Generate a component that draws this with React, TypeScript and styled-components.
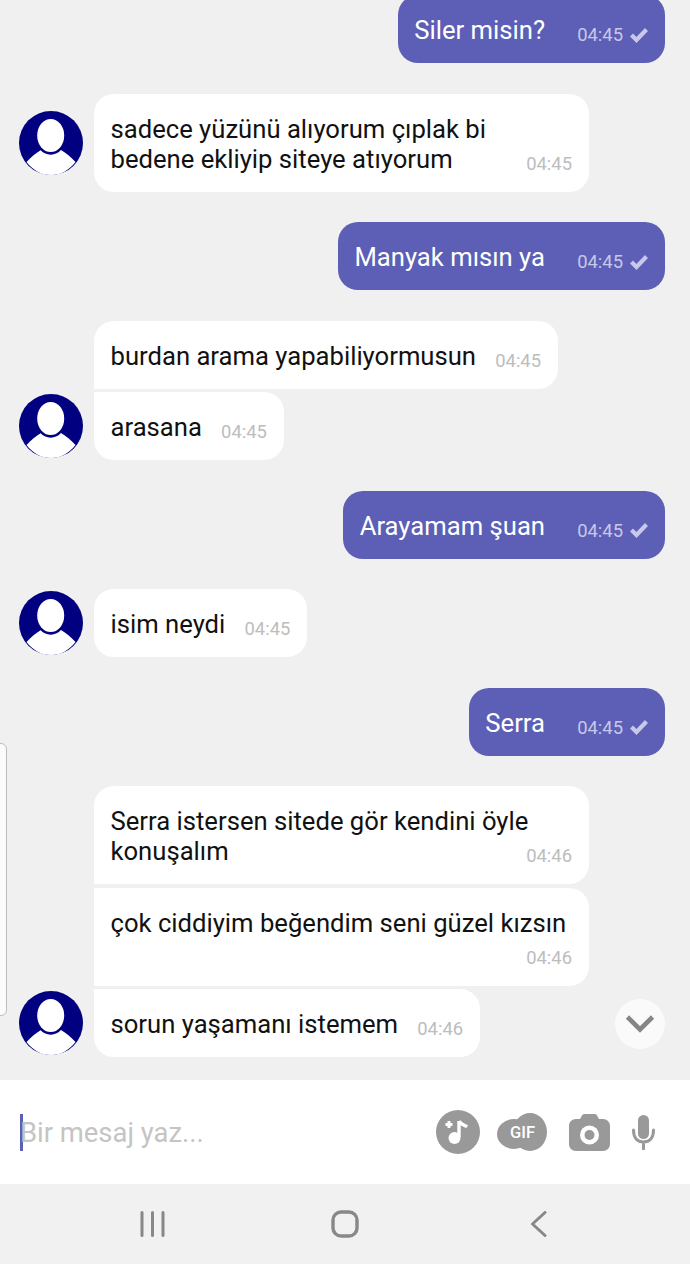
import styled, { createGlobalStyle } from "styled-components";

const GlobalStyle = createGlobalStyle`
  html, body {
    margin: 0;
    padding: 0;
    background: #f0f0f0;
  }
`;

const Screen = styled.div`
  position: relative;
  display: flex;
  flex-direction: column;
  width: 690px;
  height: 1264px;
  overflow: hidden;
  background: #f0f0f0;
  font-family: Roboto, "Noto Sans", sans-serif;
`;

const Chat = styled.div`
  display: flex;
  flex-direction: column;
  justify-content: flex-end;
  gap: 30.5px;
  height: 1080px;
  padding: 0 25px 23px 19px;
  box-sizing: border-box;
  overflow: hidden;
`;

const OwnRow = styled.div`
  display: flex;
  flex-shrink: 0;
  justify-content: flex-end;
`;

const Group = styled.div`
  display: grid;
  flex-shrink: 0;
  grid-template-columns: 64px 1fr;
  column-gap: 11px;
  row-gap: 3.4px;
  align-items: center;
  justify-items: start;
`;

const Avatar = styled.svg`
  grid-column: 1;
  width: 64px;
  height: 64px;
`;

const Bubble = styled.div<{ $own?: boolean; $joinTop?: boolean; $joinBottom?: boolean }>`
  display: grid;
  grid-column: 2;
  max-width: 495px;
  box-sizing: border-box;
  padding: 20px 17px 18px 16.5px;
  border-radius: 20px;
  border-top-left-radius: ${(p) => (p.$joinTop ? "0" : "20px")};
  border-bottom-left-radius: ${(p) => (p.$joinBottom ? "0" : "20px")};
  background: ${(p) => (p.$own ? "#5c5fb5" : "#ffffff")};
  color: ${(p) => (p.$own ? "#ffffff" : "#111111")};
`;

const Text = styled.div`
  grid-area: 1 / 1;
  font-size: 25.65px;
  line-height: 30px;
`;

const MetaSpace = styled.span<{ $own?: boolean }>`
  display: inline-block;
  width: ${(p) => (p.$own ? "103px" : "65px")};
  height: 1px;
`;

const Meta = styled.div<{ $own?: boolean }>`
  display: flex;
  grid-area: 1 / 1;
  align-self: end;
  justify-self: end;
  align-items: center;
  gap: 7px;
  font-size: 18.4px;
  line-height: 20px;
  color: ${(p) => (p.$own ? "#c7c8ea" : "#bdbdbd")};
`;

const Composer = styled.div`
  display: flex;
  flex-shrink: 0;
  align-items: center;
  height: 104px;
  padding: 0 35px 0 20px;
  box-sizing: border-box;
  background: #ffffff;
`;

const Caret = styled.div`
  flex-shrink: 0;
  width: 3px;
  height: 37px;
  background: #5c5fb5;
`;

const Placeholder = styled.div`
  flex: 1;
  margin: 2px 0 0 -3px;
  font-size: 27.4px;
  line-height: 37px;
  color: #c4c4c4;
`;

const Tools = styled.div`
  display: flex;
  align-items: center;
`;

const Tool = styled.svg<{ $gap: number }>`
  display: block;
  margin-left: ${(p) => p.$gap}px;
`;

const NavBar = styled.div`
  display: flex;
  flex: 1;
  align-items: center;
  padding-left: 140px;
  background: #f1f1f1;
`;

const NavIcon = styled.svg<{ $gap: number }>`
  display: block;
  margin-left: ${(p) => p.$gap}px;
`;

const ScrollButton = styled.div`
  position: absolute;
  top: 999px;
  left: 615px;
  display: flex;
  align-items: center;
  justify-content: center;
  width: 50px;
  height: 50px;
  border-radius: 50%;
  background: #fafafa;
`;

const EdgeHandle = styled.div`
  position: absolute;
  top: 743px;
  left: -6px;
  width: 13px;
  height: 273px;
  box-sizing: border-box;
  border: 1px solid #bdbdbd;
  border-radius: 6px;
  background: #fbfbfb;
`;

const UserAvatar = () => (
  <Avatar viewBox="0 0 64 64">
    <circle cx="32" cy="32" r="32" fill="#000080" />
    <path d="M7.5 51C12 46 17 42 22 39L42 39C47 42 52 46 56.5 51C50 59.5 41.5 64 32 64C22.5 64 14 59.5 7.5 51Z" fill="#fff" />
    <ellipse cx="31.7" cy="25" rx="15.5" ry="18.8" fill="#000080" />
    <ellipse cx="31.7" cy="24.5" rx="13.5" ry="16.5" fill="#fff" />
  </Avatar>
);

const Check = () => (
  <svg width="18" height="15" viewBox="0 0 18 15">
    <path d="M1.5 7L6.5 12L16.5 1.5" fill="none" stroke="#c7c8ea" strokeWidth="4.2" />
  </svg>
);

const Own = ({ text }: { text: string }) => (
  <OwnRow>
    <Bubble $own>
      <Text>
        {text}
        <MetaSpace $own />
      </Text>
      <Meta $own>
        04:45
        <Check />
      </Meta>
    </Bubble>
  </OwnRow>
);

type IncomingProps = {
  text: string;
  time?: string;
  joinTop?: boolean;
  joinBottom?: boolean;
};

const Incoming = ({ text, time = "04:45", joinTop, joinBottom }: IncomingProps) => (
  <Bubble $joinTop={joinTop} $joinBottom={joinBottom}>
    <Text>
      {text}
      <MetaSpace />
    </Text>
    <Meta>{time}</Meta>
  </Bubble>
);

export default function App() {
  return (
    <Screen>
      <GlobalStyle />
      <Chat>
        <Own text="Siler misin?" />
        <Group>
          <UserAvatar />
          <Incoming text="sadece yüzünü alıyorum çıplak bi bedene ekliyip siteye atıyorum" />
        </Group>
        <Own text="Manyak mısın ya" />
        <Group>
          <Incoming joinBottom text="burdan arama yapabiliyormusun" />
          <UserAvatar />
          <Incoming joinTop text="arasana" />
        </Group>
        <Own text="Arayamam şuan" />
        <Group>
          <UserAvatar />
          <Incoming text="isim neydi" />
        </Group>
        <Own text="Serra" />
        <Group>
          <Incoming joinBottom time="04:46" text="Serra istersen sitede gör kendini öyle konuşalım" />
          <Incoming joinTop joinBottom time="04:46" text="çok ciddiyim beğendim seni güzel kızsın" />
          <UserAvatar />
          <Incoming joinTop time="04:46" text="sorun yaşamanı istemem" />
        </Group>
      </Chat>
      <Composer>
        <Caret />
        <Placeholder>Bir mesaj yaz...</Placeholder>
        <Tools>
          <Tool $gap={0} width="44" height="44" viewBox="0 0 44 44">
            <circle cx="22" cy="22" r="22" fill="#999" />
            <path d="M23 11V27" stroke="#fff" strokeWidth="3.4" />
            <path d="M23 11C25 15 29 15 31 17" fill="none" stroke="#fff" strokeWidth="3.4" />
            <circle cx="18.5" cy="28" r="6" fill="#fff" />
            <path d="M13 11V18M9.5 14.5H16.5" stroke="#fff" strokeWidth="3" />
          </Tool>
          <Tool $gap={17} width="50" height="38" viewBox="0 0 50 38">
            <ellipse cx="17" cy="21" rx="17" ry="15" fill="#999" />
            <ellipse cx="33" cy="19" rx="17" ry="19" fill="#999" />
            <text x="25.5" y="25" textAnchor="middle" fontFamily="Roboto, sans-serif" fontWeight="500" fontSize="16.5" fill="#fff">GIF</text>
          </Tool>
          <Tool $gap={22} width="41" height="37" viewBox="0 0 41 37">
            <path d="M7 5H11L13 1.5C13.5 .5 14.5 0 15.5 0H25.5C26.5 0 27.5 .5 28 1.5L30 5H34C38 5 41 8 41 12V30C41 34 38 37 34 37H7C3 37 0 34 0 30V12C0 8 3 5 7 5Z" fill="#999" />
            <circle cx="20.5" cy="21" r="9.5" fill="#fff" />
            <circle cx="20.5" cy="21" r="5" fill="#999" />
          </Tool>
          <Tool $gap={22} width="23" height="35" viewBox="0 0 23 35">
            <rect x="6" y="0" width="11" height="24" rx="5.5" fill="#999" />
            <path d="M1.5 15C1.5 23 5.5 27 11.5 27C17.5 27 21.5 23 21.5 15M11.5 27V34" fill="none" stroke="#999" strokeWidth="3" strokeLinecap="round" />
          </Tool>
        </Tools>
      </Composer>
      <NavBar>
        <NavIcon $gap={0} width="25" height="26" viewBox="0 0 25 26">
          <path d="M2 1.5V24.5M12.5 1.5V24.5M23 1.5V24.5" stroke="#888" strokeWidth="3" strokeLinecap="round" />
        </NavIcon>
        <NavIcon $gap={166} width="28" height="28" viewBox="0 0 28 28">
          <rect x="2" y="2" width="24" height="24" rx="8" fill="none" stroke="#888" strokeWidth="3.4" />
        </NavIcon>
        <NavIcon $gap={171} width="17" height="26" viewBox="0 0 17 26">
          <path d="M15 1.5L2.5 13L15 24.5" fill="none" stroke="#888" strokeWidth="3" strokeLinecap="round" strokeLinejoin="round" />
        </NavIcon>
      </NavBar>
      <ScrollButton>
        <svg width="30" height="20" viewBox="0 0 30 20">
          <path d="M2.5 3L15 15.5L27.5 3" fill="none" stroke="#858585" strokeWidth="4.6" />
        </svg>
      </ScrollButton>
      <EdgeHandle />
    </Screen>
  );
}
